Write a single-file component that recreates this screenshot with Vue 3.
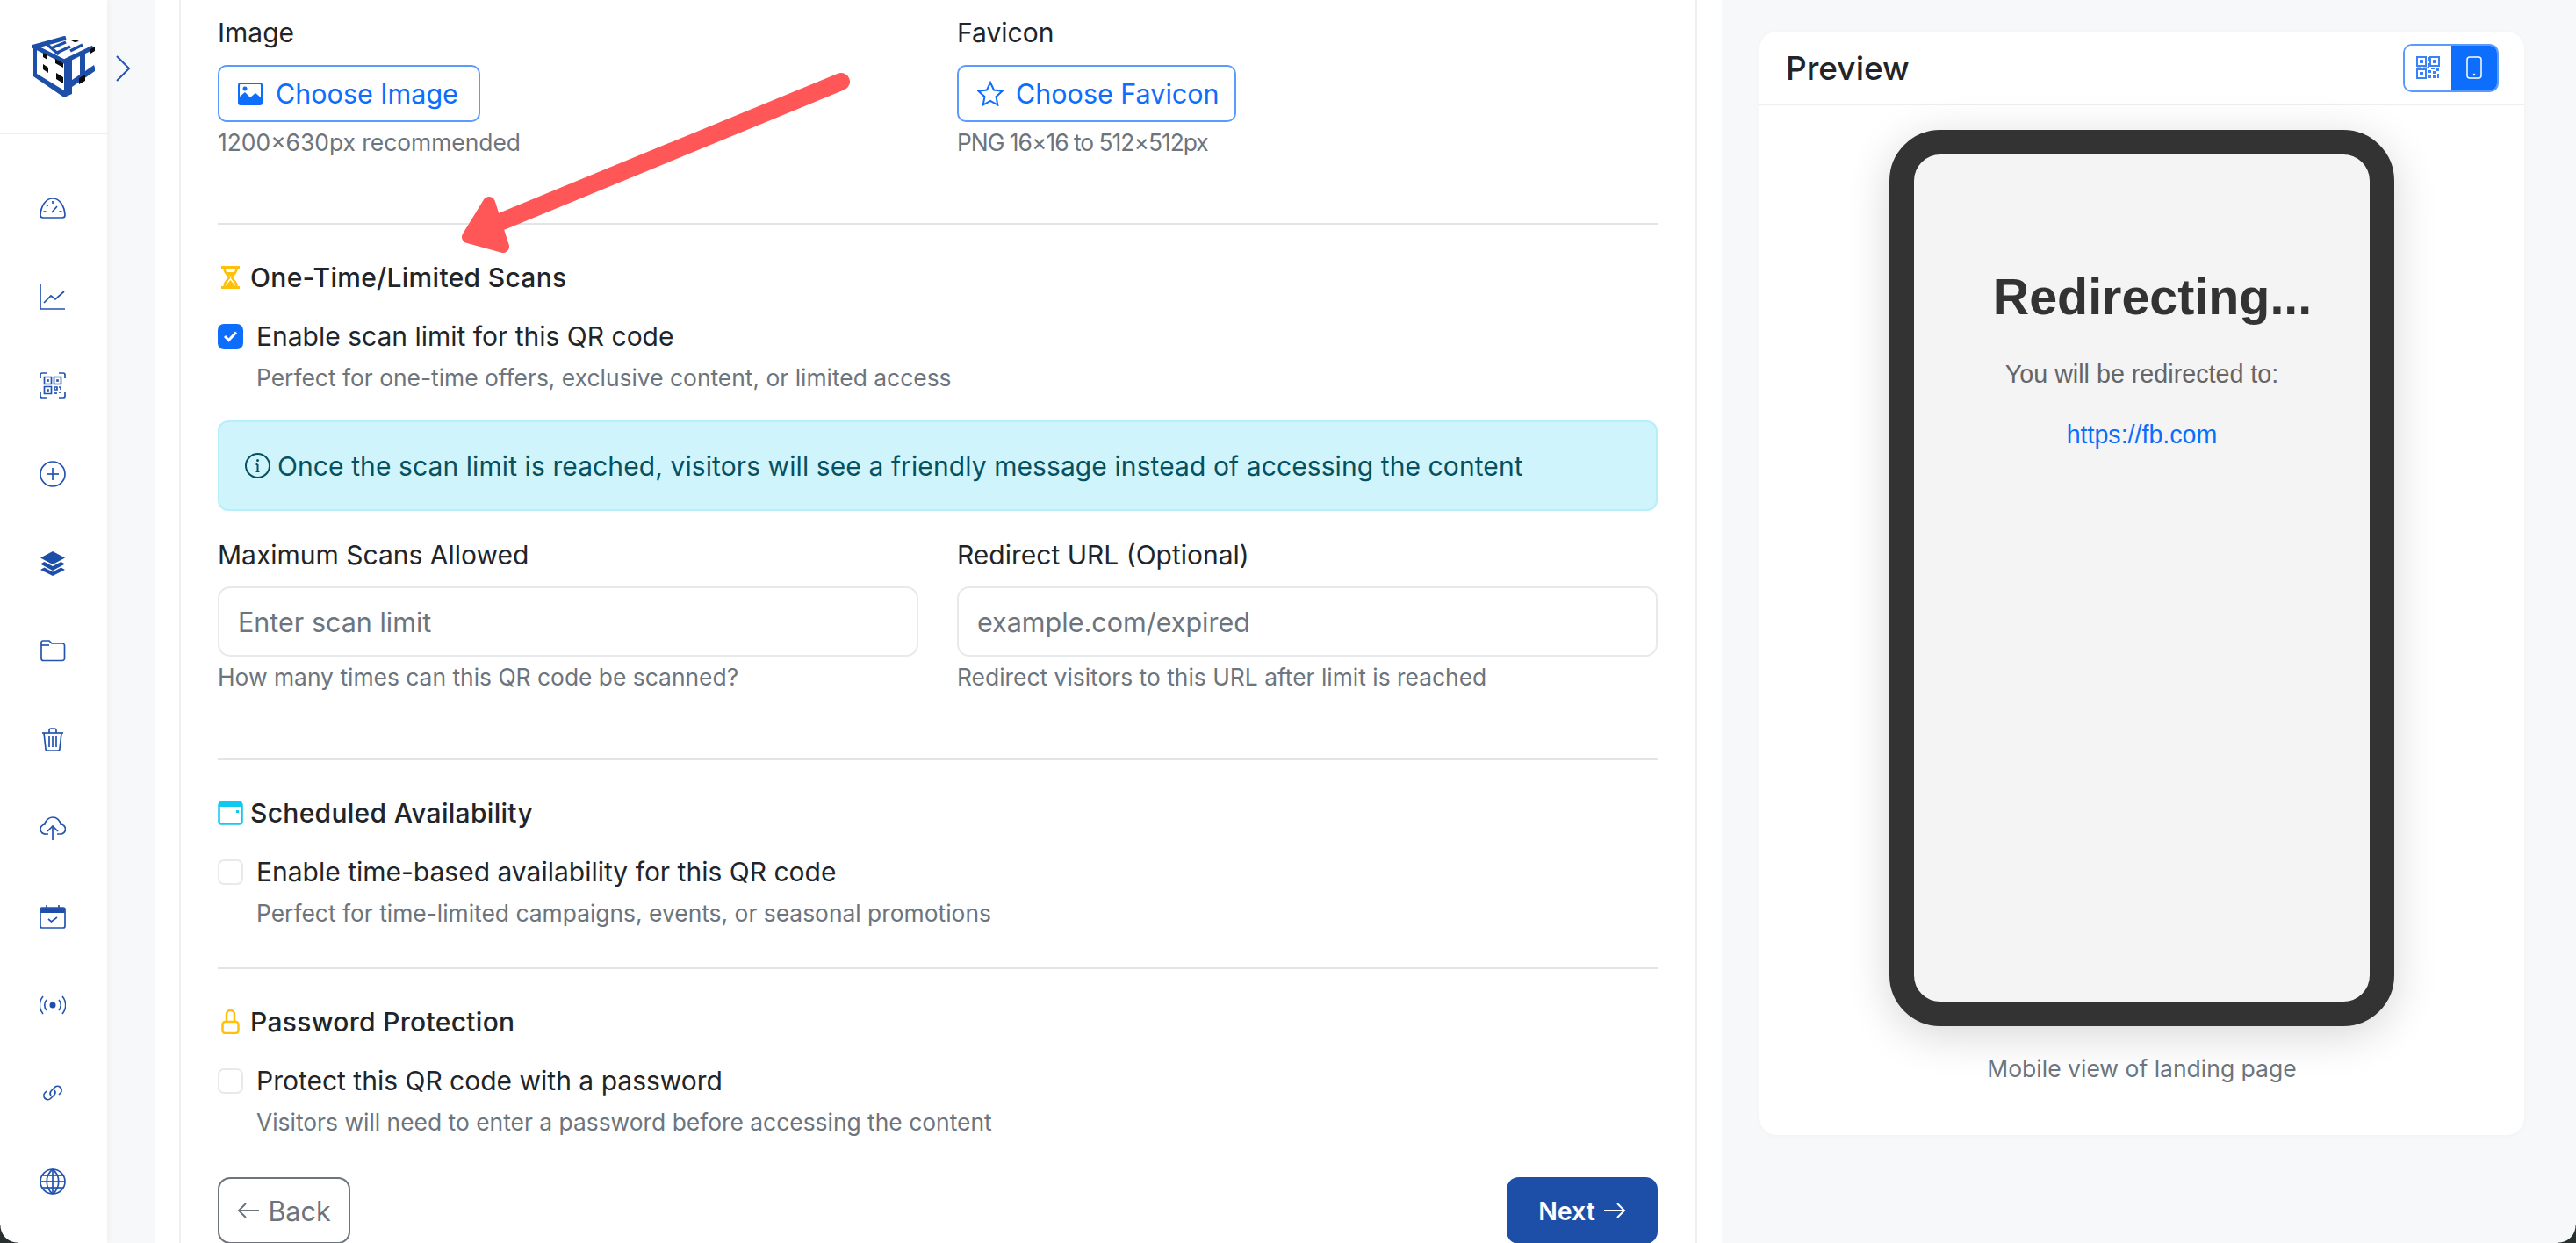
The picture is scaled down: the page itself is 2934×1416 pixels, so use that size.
<script setup>
const navIcons = [
  { name: 'dashboard', lines: ['M4 26h22a3 3 0 0 0 3-3C28.500 13 23 4 15 4S1.500 13 1 23a3 3 0 0 0 3 3z', 'M15 7v3', 'M7.500 11l2 2', 'M4.500 19h3', 'M22.500 19h3', 'M14 20l6-7'] },
  { name: 'stats', lines: ['M1 1v28h28', 'M5 22l8-8 5 4 10-9'] },
  { name: 'codes', lines: ['M1 7V3a2 2 0 0 1 2-2h5', 'M22 1h5a2 2 0 0 1 2 2v4', 'M1 23v4a2 2 0 0 0 2 2h5', 'M29 23v4a2 2 0 0 1-2 2h-5', 'M5.500 5.500h8v8h-8z', 'M16.500 5.500h8v8h-8z', 'M5.500 16.500h8v8h-8z', 'M9 9h1v1H9z', 'M20 9h1v1h-1z', 'M9 20h1v1H9z', 'M17 17h3v3h-3z', 'M22 17h2v3', 'M17 24h3', 'M23 22v2'] },
  { name: 'create', lines: ['M15 1a14 14 0 1 0 0 28a14 14 0 1 0 0-28z', 'M15 8v14', 'M8 15h14'] },
  { name: 'layers', solid: 'M15 2L29 9.500L15 17L1 9.500zM5.500 14L1 16.500L15 24L29 16.500L24.500 14L15 19zM5.500 20.500L1 23L15 30L29 23L24.500 20.500L15 25.500z' },
  { name: 'folder', lines: ['M2 8V5.500A2 2 0 0 1 4 4h7l3 3h12a2.500 2.500 0 0 1 2.500 2.500V24a2.500 2.500 0 0 1-2.500 2.500H4.500A2.500 2.500 0 0 1 2 24z', 'M2 9h9'] },
  { name: 'trash', lines: ['M3 8h24', 'M11 8V5a2 2 0 0 1 2-2h4a2 2 0 0 1 2 2v3', 'M5 8l2 18a2 2 0 0 0 2 2h12a2 2 0 0 0 2-2l2-18', 'M11 12v12', 'M15 12v12', 'M19 12v12'] },
  { name: 'upload', lines: ['M10 22H7a5.500 5.500 0 0 1-1-11A9.500 9.500 0 0 1 15 3a9 9 0 0 1 9 8a5.500 5.500 0 0 1 0 11h-4', 'M15 29V13', 'M9 19l6-6 6 6'] },
  { name: 'calendar', lines: ['M3 5h24a2 2 0 0 1 2 2v19a2 2 0 0 1-2 2H3a2 2 0 0 1-2-2V7a2 2 0 0 1 2-2z', 'M8 2v4', 'M22 2v4', 'M10 18l3.500 3 6.500-5'], solid: 'M1 7a2 2 0 0 1 2-2h24a2 2 0 0 1 2 2v4H1z' },
  { name: 'broadcast', lines: ['M8 9c-3 3-3 9 0 12', 'M22 9c3 3 3 9 0 12', 'M4 5c-5 6-5 14 0 20', 'M26 5c5 6 5 14 0 20'], solid: 'M15 11.500a3.500 3.500 0 1 0 0 7a3.500 3.500 0 1 0 0-7z' },
  { name: 'link', lines: ['M13 18a4 4 0 0 1 0-5l4-4a4.500 4.500 0 0 1 7 6l-2 2', 'M17 12a4 4 0 0 1 0 5l-4 4a4.500 4.500 0 0 1-7-6l2-2'] },
  { name: 'globe', lines: ['M15 1a14 14 0 1 0 0 28a14 14 0 1 0 0-28z', 'M15 1v28', 'M1 15h28', 'M3 8h24', 'M3 22h24', 'M15 1c-9 7-9 21 0 28', 'M15 1c9 7 9 21 0 28'] },
]
</script>

<template>
  <div class="page">
    <aside class="sidebar">
      <div class="brand">
        <svg class="logo" width="75" height="72" viewBox="0 0 75 72">
          <path class="logo-blue" d="M2 12L6 14V43L37 62V70L2 46z" />
          <path class="logo-line" d="M39 2L3 12L37 29L70 13" />
          <path class="logo-line thin" d="M17 9L31 21M22 14L39 7M29 19L44 12M44 17L58 10" />
          <path class="logo-blue" d="M37 30L46 26V50L55 44V21L61 18V40L71 33L72 36V40L46 58V66L37 70z" />
          <path class="logo-black" d="M13 19L18 22V27L13 24zM27 26L36 31V36L27 31zM13 32L19 36V42L13 38zM28 42L36 47V54L28 49zM54 48L61 44V51L54 55zM67 15L72 12V17L67 20zM45 5L50 4L54 6L49 7z" />
        </svg>
      </div>
      <nav class="nav">
        <div v-for="icon in navIcons" :key="icon.name" class="nav-item">
          <svg class="nav-icon" width="30" height="30" viewBox="0 0 30 30">
            <path v-if="icon.solid" class="nav-solid" :d="icon.solid" />
            <path v-for="line in icon.lines" :key="line" :d="line" />
          </svg>
        </div>
      </nav>
    </aside>

    <svg class="chevron" width="18" height="32" viewBox="0 0 18 32"><path d="M2 2l14 14L2 30" /></svg>

    <main class="content">
      <div class="form-card">
        <div class="row upload-row">
          <div class="col">
            <div class="label">Image</div>
            <button class="file-btn image-btn">
              <svg width="28" height="26" viewBox="0 0 28 26">
                <path class="fill-primary" d="M3 0h22a3 3 0 0 1 3 3v20a3 3 0 0 1-3 3H3a3 3 0 0 1-3-3V3a3 3 0 0 1 3-3zM3 2a1 1 0 0 0-1 1v13l6-5 6 6 6-5 6 5V3a1 1 0 0 0-1-1z" />
                <circle class="fill-primary" cx="8" cy="7" r="2.500" />
              </svg>
              <span>Choose Image</span>
            </button>
            <div class="hint hint-upload">1200×630px recommended</div>
          </div>
          <div class="col">
            <div class="label">Favicon</div>
            <button class="file-btn favicon-btn">
              <svg width="30" height="29" viewBox="0 0 30 29">
                <path class="stroke-primary" d="M15 2l4 8.500 9.500 1.200-7 6.500 1.800 9.300-8.300-4.600-8.300 4.600 1.800-9.300-7-6.500L11 10.500z" />
              </svg>
              <span>Choose Favicon</span>
            </button>
            <div class="hint hint-upload hint-png">PNG 16×16 to 512×512px</div>
          </div>
        </div>

        <hr class="divider first" />

        <section>
          <h3 class="section-title">
            <svg class="title-icon" width="29" height="28" viewBox="0 0 29 28">
              <path class="amber" d="M4 1h21v3H4zM4 24h21v3H4z" />
              <path class="amber-line" d="M7.500 4c0 5 4.500 7 5.500 10c-1 3-5.500 5-5.500 10M21.500 4c0 5-4.500 7-5.500 10c1 3 5.500 5 5.500 10" />
              <path class="amber" d="M9 8h11l-5.500 5zM14.500 17l6 7H8.500z" />
            </svg>
            One-Time/Limited Scans
          </h3>
          <div class="check-row">
            <span class="check checked">
              <svg width="17" height="14" viewBox="0 0 17 14"><path d="M2 7l4.500 4.500L15 2.500" /></svg>
            </span>
            <span class="check-label">Enable scan limit for this QR code</span>
          </div>
          <p class="desc">Perfect for one-time offers, exclusive content, or limited access</p>

          <div class="alert">
            <svg width="29" height="29" viewBox="0 0 29 29">
              <circle cx="14.500" cy="14.500" r="13.500" />
              <path d="M14.500 13v8M12.500 21h4M12.500 13h2" />
              <circle class="alert-dot" cx="14.500" cy="8.500" r="1.500" />
            </svg>
            <span>Once the scan limit is reached, visitors will see a friendly message instead of accessing the content</span>
          </div>

          <div class="row fields">
            <div class="col">
              <label class="label">Maximum Scans Allowed</label>
              <input class="field" placeholder="Enter scan limit" />
              <div class="hint">How many times can this QR code be scanned?</div>
            </div>
            <div class="col">
              <label class="label">Redirect URL (Optional)</label>
              <input class="field" placeholder="example.com/expired" />
              <div class="hint">Redirect visitors to this URL after limit is reached</div>
            </div>
          </div>
        </section>

        <hr class="divider second" />

        <section>
          <h3 class="section-title">
            <svg class="title-icon" width="29" height="28" viewBox="0 0 29 28">
              <rect class="cyan-line" x="1.500" y="3" width="26" height="23.500" rx="2.500" />
              <path class="cyan" d="M1 3.500a2.500 2.500 0 0 1 2.500-2.500h22a2.500 2.500 0 0 1 2.500 2.500V7H1z" />
              <rect class="cyan" x="21" y="11" width="3" height="3" />
            </svg>
            Scheduled Availability
          </h3>
          <div class="check-row">
            <span class="check"></span>
            <span class="check-label">Enable time-based availability for this QR code</span>
          </div>
          <p class="desc">Perfect for time-limited campaigns, events, or seasonal promotions</p>
        </section>

        <hr class="divider third" />

        <section>
          <h3 class="section-title">
            <svg class="title-icon" width="29" height="28" viewBox="0 0 29 28">
              <rect class="amber-line" x="5.500" y="14" width="18" height="13" rx="3" />
              <path class="amber-line" d="M10 14V5.500a4.500 4.500 0 0 1 9 0V14" />
            </svg>
            Password Protection
          </h3>
          <div class="check-row">
            <span class="check"></span>
            <span class="check-label">Protect this QR code with a password</span>
          </div>
          <p class="desc">Visitors will need to enter a password before accessing the content</p>
        </section>

        <div class="actions">
          <button class="btn-back">
            <svg width="26" height="20" viewBox="0 0 26 20"><path d="M25 10H2M10 2l-8 8 8 8" /></svg>
            Back
          </button>
          <button class="btn-next">
            Next
            <svg width="26" height="20" viewBox="0 0 26 20"><path d="M1 10h23M16 2l8 8-8 8" /></svg>
          </button>
        </div>
      </div>
    </main>

    <aside class="preview">
      <div class="preview-head">
        <h2>Preview</h2>
        <div class="toggle">
          <span class="toggle-part">
            <svg width="27" height="26" viewBox="0 0 27 26">
              <path class="qr" d="M1 1h10v10H1zM16 1h10v10H16zM1 15h10v10H1z" />
              <path class="qr-solid" d="M4 4h4v4H4zM19 4h4v4h-4zM4 18h4v4H4zM13 1h2v5h-2zM13 8h2v5h-2zM1 12.500h5v1.500H1zM8 12.500h7V14H8zM17 13h4v2h-4zM23 13h3v4h-3zM14 16h3v3h-3zM19 17h3v3h-3zM13 21h4v4h-4zM19 22h3v3h-3zM24 20h2v5h-2z" />
            </svg>
          </span>
          <span class="toggle-part active">
            <svg width="18" height="26" viewBox="0 0 18 26">
              <rect x="1" y="1" width="16" height="24" rx="3" />
              <circle cx="9" cy="21" r="1.300" />
            </svg>
          </span>
        </div>
      </div>
      <div class="preview-body">
        <div class="phone">
          <div class="screen">
            <h1>Redirecting...</h1>
            <p>You will be redirected to:</p>
            <a>https://fb.com</a>
          </div>
        </div>
        <div class="caption">Mobile view of landing page</div>
      </div>
    </aside>

    <svg class="arrow" width="480" height="240" viewBox="0 0 480 240">
      <path class="arrow-shaft" d="M458 31L72 190" />
      <path class="arrow-head" d="M33 208L57 169L73 219z" />
    </svg>

    <span class="corner corner-left"></span>
    <span class="corner corner-right"></span>
  </div>
</template>

<style scoped>
.page {
  position: relative;
  display: flex;
  height: 1416px;
  overflow: hidden;
  background: #f7f8fa;
  font-family: Inter, "Liberation Sans", sans-serif;
  color: #212529;
}

.sidebar {
  flex: 0 0 122px;
  background: #fff;
  box-shadow: 2px 0 8px rgba(0, 0, 0, 0.04);
}

.brand {
  height: 153px;
  box-sizing: border-box;
  border-bottom: 2px solid #eceef0;
  padding: 41px 0 0 36px;
}

.logo {
  display: block;
}

.logo-blue {
  fill: #1e4fa8;
}

.logo-line {
  fill: none;
  stroke: #1e4fa8;
  stroke-width: 5;
}

.logo-line.thin {
  stroke-width: 3.500;
}

.logo-black {
  fill: #0c0c0c;
}

.nav {
  padding-top: 34px;
}

.nav-item {
  height: 100.8px;
  display: flex;
  align-items: center;
  justify-content: center;
  padding-left: 3px;
  box-sizing: border-box;
  padding-right: 6px;
}

.nav-icon path {
  fill: none;
  stroke: #2454b0;
  stroke-width: 1.7;
}

.nav-icon .nav-solid {
  fill: #1e4fa8;
  stroke: none;
}

.chevron {
  position: absolute;
  left: 131px;
  top: 62px;
}

.chevron path {
  fill: none;
  stroke: #2454b0;
  stroke-width: 2;
}

.content {
  flex: 0 0 1785px;
  margin-left: 54px;
  padding: 0 28px;
  box-sizing: border-box;
  background: #fff;
  height: 1416px;
}

.form-card {
  box-sizing: border-box;
  height: 1500px;
  border-left: 2px solid #eeeff1;
  border-right: 2px solid #eeeff1;
  padding: 19px 43px 0 42px;
}

.row {
  display: flex;
  gap: 44px;
}

.col {
  flex: 1 1 0;
  min-width: 0;
}

.label {
  display: block;
  font-size: 30px;
  line-height: 36px;
  color: #212529;
}

.file-btn {
  display: flex;
  align-items: center;
  height: 65px;
  margin-top: 19px;
  box-sizing: border-box;
  background: #fff;
  border: 2px solid #5b9bfd;
  border-radius: 10px;
  color: #0d6efd;
  font: inherit;
  font-size: 30.500px;
}

.image-btn {
  width: 299px;
  padding: 0 0 0 21px;
  gap: 15px;
}

.favicon-btn {
  width: 318px;
  padding: 0 0 0 21px;
  gap: 14px;
}

.fill-primary {
  fill: #0d6efd;
  fill-rule: evenodd;
}

.stroke-primary {
  fill: none;
  stroke: #0d6efd;
  stroke-width: 2;
}

.hint {
  margin-top: 7px;
  font-size: 26.400px;
  line-height: 32px;
  color: #6c757d;
}

.hint-png {
  letter-spacing: -1px;
}

.divider {
  height: 2px;
  border: 0;
  margin: 0;
  background: #e3e4e6;
}

.divider.first {
  margin-top: 76px;
}

.divider.second {
  margin-top: 77px;
}

.divider.third {
  margin-top: 46px;
}

.section-title {
  display: flex;
  align-items: center;
  gap: 8px;
  margin: 42px 0 0;
  font-size: 30px;
  line-height: 36px;
  font-weight: 500;
  letter-spacing: 0.3px;
}

.title-icon {
  flex: none;
}

.amber {
  fill: #ffc107;
}

.amber-line {
  fill: none;
  stroke: #ffc107;
  stroke-width: 2.500;
}

.cyan {
  fill: #0dcaf0;
}

.cyan-line {
  fill: none;
  stroke: #0dcaf0;
  stroke-width: 2.500;
}

.check-row {
  display: flex;
  align-items: center;
  gap: 15px;
  margin-top: 31px;
}

.check {
  flex: none;
  display: flex;
  align-items: center;
  justify-content: center;
  width: 29px;
  height: 29px;
  box-sizing: border-box;
  border: 2px solid #e8e9eb;
  border-radius: 7px;
  background: #fff;
}

.check.checked {
  background: #0d6efd;
  border-color: #0d6efd;
}

.check svg path {
  fill: none;
  stroke: #fff;
  stroke-width: 3;
}

.check-label {
  font-size: 30px;
  line-height: 36px;
}

.desc {
  margin: 13px 0 0 44px;
  font-size: 26.400px;
  line-height: 32px;
  color: #6c757d;
}

.alert {
  display: flex;
  align-items: center;
  gap: 8px;
  height: 103px;
  margin-top: 33px;
  padding-left: 29px;
  box-sizing: border-box;
  background: #cff4fc;
  border: 2px solid #b6effb;
  border-radius: 12px;
  font-size: 30px;
  letter-spacing: 0.09px;
  color: #055160;
}

.alert svg {
  flex: none;
}

.alert svg circle,
.alert svg path {
  fill: none;
  stroke: #055160;
  stroke-width: 2;
}

.alert svg .alert-dot {
  fill: #055160;
  stroke: none;
}

.fields {
  margin-top: 32px;
}

.field {
  display: block;
  width: 100%;
  height: 80px;
  margin-top: 18px;
  padding: 0 21px;
  box-sizing: border-box;
  border: 2px solid #e8e9eb;
  border-radius: 14px;
  font: inherit;
  font-size: 30.500px;
  background: #fff;
  outline: none;
}

.field::placeholder {
  color: #6c757d;
  opacity: 1;
}

.actions {
  display: flex;
  justify-content: space-between;
  margin-top: 47px;
}

.btn-back,
.btn-next {
  display: flex;
  align-items: center;
  justify-content: center;
  gap: 9px;
  height: 76px;
  box-sizing: border-box;
  border-radius: 14px;
  font: inherit;
  font-size: 30.500px;
}

.btn-back {
  width: 151px;
  background: #fff;
  border: 2px solid #6c757d;
  color: #6c757d;
}

.btn-back svg path {
  fill: none;
  stroke: #6c757d;
  stroke-width: 2;
}

.btn-next {
  width: 172px;
  background: #1e4fa8;
  border: 0;
  color: #fff;
  font-size: 28.500px;
  font-weight: 600;
}

.btn-next svg path {
  fill: none;
  stroke: #fff;
  stroke-width: 2;
}

.preview {
  flex: 0 0 871px;
  height: 1257px;
  margin: 36px 0 0 43px;
  background: #fff;
  border-radius: 20px;
  box-shadow: 0 1px 6px rgba(0, 0, 0, 0.03);
}

.preview-head {
  display: flex;
  align-items: center;
  justify-content: space-between;
  height: 84px;
  box-sizing: border-box;
  padding: 0 29px 0 30px;
  border-bottom: 2px solid #eceef0;
}

.preview-head h2 {
  margin: 0;
  font-size: 37px;
  font-weight: 500;
  color: #212529;
}

.toggle {
  display: flex;
  width: 109px;
  height: 55px;
  box-sizing: border-box;
  border: 2px solid #5b9bfd;
  border-radius: 10px;
  overflow: hidden;
}

.toggle-part {
  flex: 1;
  display: flex;
  align-items: center;
  justify-content: center;
  background: #fff;
}

.toggle-part.active {
  background: #0d6efd;
}

.qr {
  fill: none;
  stroke: #3b82f6;
  stroke-width: 2;
}

.qr-solid {
  fill: #3b82f6;
}

.toggle-part.active rect {
  fill: none;
  stroke: #fff;
  stroke-width: 1.500;
}

.toggle-part.active circle {
  fill: #fff;
}

.preview-body {
  display: flex;
  flex-direction: column;
  align-items: center;
  padding-top: 28px;
}

.phone {
  width: 575px;
  height: 1021px;
  box-sizing: border-box;
  border: 28px solid #333;
  border-radius: 58px;
  background: #f4f4f4;
  box-shadow: 0 10px 50px rgba(0, 0, 0, 0.16);
}

.screen {
  display: flex;
  flex-direction: column;
  align-items: center;
  font-family: "Liberation Sans", Arial, sans-serif;
}

.screen h1 {
  margin: 127px 0 0;
  padding-left: 24px;
  font-size: 57.400px;
  line-height: 70px;
  font-weight: 700;
  color: #333;
}

.screen p {
  margin: 36px 0 0;
  font-size: 28.700px;
  line-height: 34px;
  color: #666;
}

.screen a {
  margin-top: 35px;
  font-size: 28.600px;
  line-height: 34px;
  color: #0d6efd;
}

.caption {
  margin-top: 32px;
  font-size: 26.500px;
  line-height: 32px;
  color: #6c757d;
}

.arrow {
  position: absolute;
  left: 500px;
  top: 62px;
}

.arrow-shaft {
  fill: none;
  stroke: #ff5757;
  stroke-width: 20;
  stroke-linecap: round;
}

.arrow-head {
  fill: #ff5757;
  stroke: #ff5757;
  stroke-width: 14;
  stroke-linejoin: round;
}

.corner {
  position: absolute;
  bottom: 0;
  width: 20px;
  height: 20px;
}

.corner-left {
  left: 0;
  background: radial-gradient(circle at 100% 0, transparent 19px, #27302f 20px);
}

.corner-right {
  right: 0;
  background: radial-gradient(circle at 0 0, transparent 19px, #27302f 20px);
}
</style>

<style>
body {
  background: #f7f8fa;
}
</style>
